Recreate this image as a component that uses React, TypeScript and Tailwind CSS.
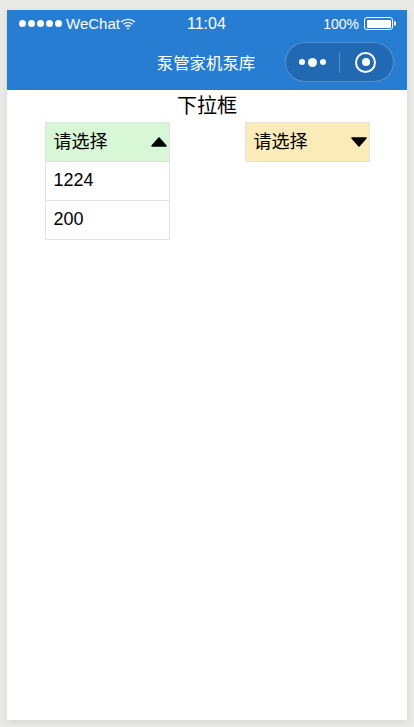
import React from 'react';

const cjk = { fontFamily: '"Liberation Sans", "Noto Sans CJK SC", sans-serif' };

const Triangle: React.FC<{ up?: boolean }> = ({ up }) => (
  <svg width="16" height="10" viewBox="0 0 16 10" className={up ? '' : 'rotate-180'}>
    <path d="M8 1 L15 9 L1 9 Z" fill="#000" strokeLinejoin="round" stroke="#000" strokeWidth="1.6" />
  </svg>
);

const StatusBar: React.FC = () => (
  <div className="relative flex h-[26px] items-center justify-between pl-[12px] pr-[11px] pt-[1px] text-[15px] leading-none text-white">
    <div className="flex items-center">
      <div className="flex gap-[2px]">
        {[0, 1, 2, 3, 4].map((i) => (
          <span key={i} className="h-[7px] w-[7px] rounded-full bg-white" />
        ))}
      </div>
      <span className="ml-[4px]">WeChat</span>
      <svg width="16" height="12" viewBox="0 0 16 12" fill="none" stroke="#fff" strokeWidth="1.3">
        <path d="M1 4 C5 0.6 11 0.6 15 4" />
        <path d="M3.2 6.2 C6 4 10 4 12.8 6.2" />
        <path d="M5.4 8.4 C7 7.3 9 7.3 10.6 8.4" />
        <path d="M8 11.6 L6.6 10 C7.4 9.5 8.6 9.5 9.4 10 Z" fill="#fff" stroke="none" />
      </svg>
    </div>
    <span className="absolute left-[180px] text-[16px]">11:04</span>
    <div className="flex items-center">
      <span className="text-[14px]">100%</span>
      <div className="ml-[5px] h-[13px] w-[29px] rounded-[3px] border border-white p-[1.5px]">
        <div className="h-full w-full rounded-[1px] bg-white" />
      </div>
      <div className="ml-[1px] h-[5px] w-[2px] rounded-r-sm bg-white" />
    </div>
  </div>
);

const NavBar: React.FC = () => (
  <div className="relative flex h-[54px] items-start justify-center pr-[2px]">
    <span className="mt-[15px] text-[16.4px] font-normal leading-[24px] text-white">泵管家机泵库</span>
    <div className="absolute right-[13px] top-[6px] flex h-[40px] w-[109px] items-center rounded-full border border-white/25 bg-[#2169b3]">
      <div className="flex w-[53px] items-center justify-center gap-[3px]">
        <span className="h-[6px] w-[6px] rounded-full bg-white" />
        <span className="h-[9px] w-[9px] rounded-full bg-white" />
        <span className="h-[6px] w-[6px] rounded-full bg-white" />
      </div>
      <div className="h-[21px] w-px bg-white/25" />
      <div className="flex flex-1 items-center justify-center pr-[2px]">
        <div className="flex h-[21px] w-[21px] items-center justify-center rounded-full border-[2.5px] border-white">
          <span className="h-[8px] w-[8px] rounded-full bg-white" />
        </div>
      </div>
    </div>
  </div>
);

const App: React.FC = () => {
  return (
    <div className="h-[727px] overflow-hidden bg-[#e9e9e5] px-[7px] pt-[10px]" style={cjk}>
      <div className="h-[710px] bg-white shadow-[0_2px_6px_rgba(0,0,0,0.08)]">
        <div className="h-[80px] bg-[#267dd2]">
          <StatusBar />
          <NavBar />
        </div>

        <div className="h-[32px] text-center text-[20px] leading-[32px] text-black">下拉框</div>

        <div className="flex items-start justify-around text-[18px] text-black">
          {/* open select */}
          <div className="w-[125px] border border-[#e2e2e2]">
            <div className="flex h-[38px] items-center justify-between bg-[#d8f7d6] pl-[8px] pr-[2px]">
              <span>请选择</span>
              <Triangle up />
            </div>
            <div className="flex h-[39px] items-center border-t border-[#e2e2e2] pb-[2px] pl-[8px]">1224</div>
            <div className="flex h-[39px] items-center border-t border-[#e2e2e2] pb-[2px] pl-[8px]">200</div>
          </div>

          {/* closed select */}
          <div className="w-[125px] border border-[#e2e2e2]">
            <div className="flex h-[38px] items-center justify-between bg-[#faebb9] pl-[8px] pr-[2px]">
              <span>请选择</span>
              <Triangle />
            </div>
          </div>
        </div>
      </div>
    </div>
  );
};

export default App;
